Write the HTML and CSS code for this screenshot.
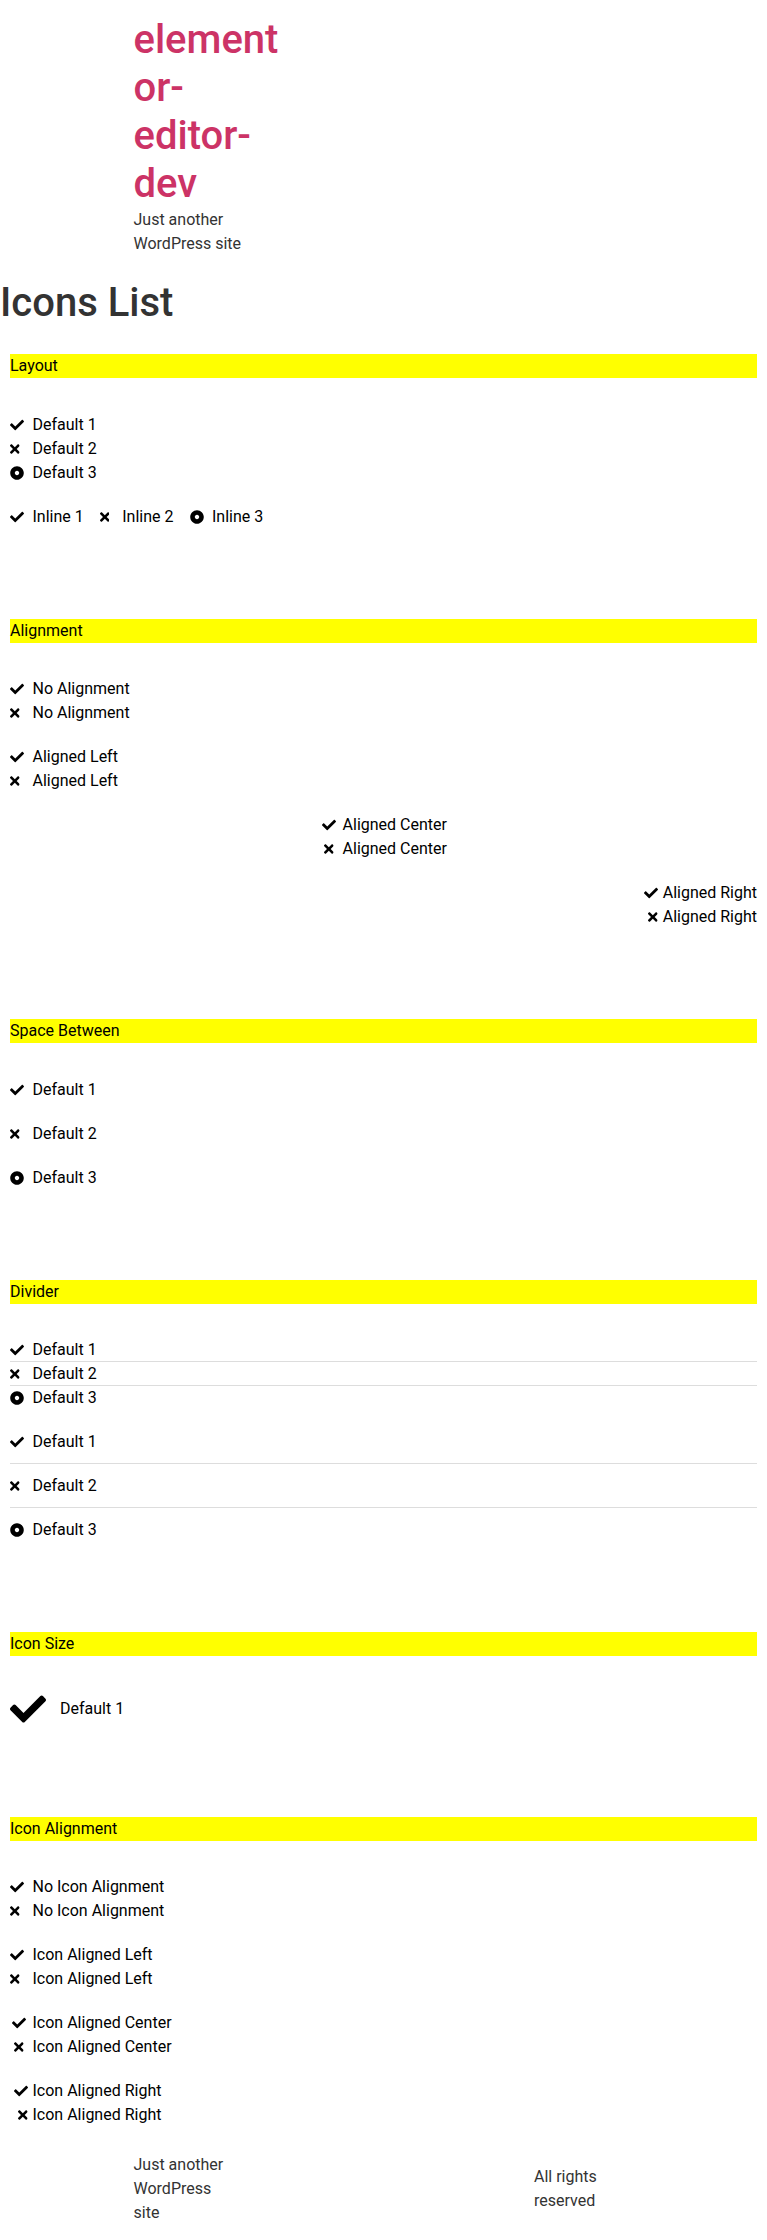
FILE: index.html
```html
<!DOCTYPE html>
<html lang="en">
<head>
<meta charset="utf-8">
<title>Icons List – elementor-editor-dev</title>
<link rel="stylesheet" href="styles.css">
</head>
<body>
<svg class="defs" width="0" height="0" aria-hidden="true">
  <defs>
    <symbol id="i-check" viewBox="0 0 512 512"><path d="M173.898 439.404l-166.4-166.4c-9.997-9.997-9.997-26.206 0-36.204l36.203-36.204c9.997-9.998 26.207-9.998 36.204 0L192 312.69 432.095 72.596c9.997-9.997 26.207-9.997 36.204 0l36.203 36.204c9.997 9.997 9.997 26.206 0 36.204l-294.4 294.401c-9.998 9.997-26.207 9.997-36.204-.001z"/></symbol>
    <symbol id="i-times" viewBox="0 0 352 512"><path d="M242.72 256l100.07-100.07c12.28-12.28 12.28-32.19 0-44.48l-22.24-22.24c-12.28-12.28-32.19-12.28-44.48 0L176 189.28 75.93 89.21c-12.28-12.28-32.19-12.28-44.48 0L9.21 111.450c-12.28 12.28-12.28 32.19 0 44.48L109.28 256 9.21 356.07c-12.28 12.28-12.28 32.19 0 44.48l22.24 22.24c12.28 12.28 32.2 12.28 44.48 0L176 322.72l100.07 100.07c12.28 12.28 32.2 12.28 44.48 0l22.24-22.24c12.28-12.28 12.28-32.19 0-44.48L242.72 256z"/></symbol>
    <symbol id="i-dot" viewBox="0 0 512 512"><path fill-rule="evenodd" d="M256 8C119.033 8 8 119.033 8 256s111.033 248 248 248 248-111.033 248-248S392.967 8 256 8zm80 248c0 44.112-35.888 80-80 80s-80-35.888-80-80 35.888-80 80-80 80 35.888 80 80z"/></symbol>
  </defs>
</svg>

<header class="site-header">
  <div class="branding">
    <a class="site-title" href="#">elementor-editor-dev</a>
    <p class="site-desc">Just another WordPress site</p>
  </div>
</header>

<main class="page">
  <h1 class="page-title">Icons List</h1>

  <section class="sec first">
    <h2 class="bar">Layout</h2>
    <div class="widgets">
      <ul class="list">
        <li class="item"><span class="ic"><svg class="g-check"><use href="#i-check"/></svg></span><span class="tx">Default 1</span></li>
        <li class="item"><span class="ic"><svg class="g-times"><use href="#i-times"/></svg></span><span class="tx">Default 2</span></li>
        <li class="item"><span class="ic"><svg class="g-dot"><use href="#i-dot"/></svg></span><span class="tx">Default 3</span></li>
      </ul>
      <ul class="list inline">
        <li class="item"><span class="ic"><svg class="g-check"><use href="#i-check"/></svg></span><span class="tx">Inline 1</span></li>
        <li class="item"><span class="ic"><svg class="g-times"><use href="#i-times"/></svg></span><span class="tx">Inline 2</span></li>
        <li class="item"><span class="ic"><svg class="g-dot"><use href="#i-dot"/></svg></span><span class="tx">Inline 3</span></li>
      </ul>
    </div>
  </section>

  <section class="sec">
    <h2 class="bar">Alignment</h2>
    <div class="widgets">
      <ul class="list">
        <li class="item"><span class="ic"><svg class="g-check"><use href="#i-check"/></svg></span><span class="tx">No Alignment</span></li>
        <li class="item"><span class="ic"><svg class="g-times"><use href="#i-times"/></svg></span><span class="tx">No Alignment</span></li>
      </ul>
      <ul class="list">
        <li class="item"><span class="ic"><svg class="g-check"><use href="#i-check"/></svg></span><span class="tx">Aligned Left</span></li>
        <li class="item"><span class="ic"><svg class="g-times"><use href="#i-times"/></svg></span><span class="tx">Aligned Left</span></li>
      </ul>
      <ul class="list al-center">
        <li class="item"><span class="ic"><svg class="g-check"><use href="#i-check"/></svg></span><span class="tx">Aligned Center</span></li>
        <li class="item"><span class="ic"><svg class="g-times"><use href="#i-times"/></svg></span><span class="tx">Aligned Center</span></li>
      </ul>
      <ul class="list al-right">
        <li class="item"><span class="ic"><svg class="g-check"><use href="#i-check"/></svg></span><span class="tx">Aligned Right</span></li>
        <li class="item"><span class="ic"><svg class="g-times"><use href="#i-times"/></svg></span><span class="tx">Aligned Right</span></li>
      </ul>
    </div>
  </section>

  <section class="sec">
    <h2 class="bar">Space Between</h2>
    <div class="widgets">
      <ul class="list spaced">
        <li class="item"><span class="ic"><svg class="g-check"><use href="#i-check"/></svg></span><span class="tx">Default 1</span></li>
        <li class="item"><span class="ic"><svg class="g-times"><use href="#i-times"/></svg></span><span class="tx">Default 2</span></li>
        <li class="item"><span class="ic"><svg class="g-dot"><use href="#i-dot"/></svg></span><span class="tx">Default 3</span></li>
      </ul>
    </div>
  </section>

  <section class="sec">
    <h2 class="bar">Divider</h2>
    <div class="widgets">
      <ul class="list divided">
        <li class="item"><span class="ic"><svg class="g-check"><use href="#i-check"/></svg></span><span class="tx">Default 1</span></li>
        <li class="item"><span class="ic"><svg class="g-times"><use href="#i-times"/></svg></span><span class="tx">Default 2</span></li>
        <li class="item"><span class="ic"><svg class="g-dot"><use href="#i-dot"/></svg></span><span class="tx">Default 3</span></li>
      </ul>
      <ul class="list divided spaced">
        <li class="item"><span class="ic"><svg class="g-check"><use href="#i-check"/></svg></span><span class="tx">Default 1</span></li>
        <li class="item"><span class="ic"><svg class="g-times"><use href="#i-times"/></svg></span><span class="tx">Default 2</span></li>
        <li class="item"><span class="ic"><svg class="g-dot"><use href="#i-dot"/></svg></span><span class="tx">Default 3</span></li>
      </ul>
    </div>
  </section>

  <section class="sec">
    <h2 class="bar">Icon Size</h2>
    <div class="widgets">
      <ul class="list big">
        <li class="item"><span class="ic"><svg class="g-check"><use href="#i-check"/></svg></span><span class="tx">Default 1</span></li>
      </ul>
    </div>
  </section>

  <section class="sec last">
    <h2 class="bar">Icon Alignment</h2>
    <div class="widgets">
      <ul class="list">
        <li class="item"><span class="ic"><svg class="g-check"><use href="#i-check"/></svg></span><span class="tx">No Icon Alignment</span></li>
        <li class="item"><span class="ic"><svg class="g-times"><use href="#i-times"/></svg></span><span class="tx">No Icon Alignment</span></li>
      </ul>
      <ul class="list">
        <li class="item"><span class="ic"><svg class="g-check"><use href="#i-check"/></svg></span><span class="tx">Icon Aligned Left</span></li>
        <li class="item"><span class="ic"><svg class="g-times"><use href="#i-times"/></svg></span><span class="tx">Icon Aligned Left</span></li>
      </ul>
      <ul class="list ia-center">
        <li class="item"><span class="ic"><svg class="g-check"><use href="#i-check"/></svg></span><span class="tx">Icon Aligned Center</span></li>
        <li class="item"><span class="ic"><svg class="g-times"><use href="#i-times"/></svg></span><span class="tx">Icon Aligned Center</span></li>
      </ul>
      <ul class="list ia-right">
        <li class="item"><span class="ic"><svg class="g-check"><use href="#i-check"/></svg></span><span class="tx">Icon Aligned Right</span></li>
        <li class="item"><span class="ic"><svg class="g-times"><use href="#i-times"/></svg></span><span class="tx">Icon Aligned Right</span></li>
      </ul>
    </div>
  </section>
</main>

<footer class="site-footer">
  <p class="f-desc">Just another WordPress site</p>
  <p class="f-copy">All rights reserved</p>
</footer>
</body>
</html>
```

FILE: styles.css
```css
* { box-sizing: border-box; }

html, body {
  margin: 0;
  padding: 0;
}

body {
  font-family: Roboto, "Liberation Sans", Arial, sans-serif;
  font-size: 16px;
  line-height: 1.5;
  color: #333;
  background: #fff;
}

.defs {
  position: absolute;
  width: 0;
  height: 0;
  overflow: hidden;
}

/* header */
.site-header {
  width: 500px;
  margin: 0 auto;
  padding: 16px 0;
}

.branding {
  width: 150px;
}

.site-title {
  display: block;
  font-size: 40px;
  font-weight: 500;
  line-height: 48px;
  color: #c36;
  text-decoration: none;
  overflow-wrap: break-word;
}

.site-desc {
  margin: 0;
  line-height: 24px;
}

/* page */
.page-title {
  margin: 7px 0 0;
  font-size: 40px;
  font-weight: 500;
  line-height: 48px;
  color: #333;
}

.sec {
  padding: 0 10px;
  margin-top: 90px;
}

.sec.first {
  margin-top: 27px;
}

.sec.last {
  padding-bottom: 10px;
}

.bar {
  margin: 0 0 34.5px;
  height: 24px;
  font-size: 16px;
  font-weight: 400;
  line-height: 24px;
  background: #ffff00;
  color: #000;
}

.widgets {
  display: flex;
  flex-direction: column;
  gap: 20px;
}

/* icon list */
.list {
  list-style: none;
  margin: 0;
  padding: 0;
  display: flex;
  flex-direction: column;
}

.item {
  position: relative;
  display: flex;
  align-items: center;
  color: #000;
}

.ic {
  display: flex;
  align-items: center;
  justify-content: flex-start;
  flex-shrink: 0;
  width: 1.25em;
  font-size: 14px;
}

.ic svg {
  display: block;
  height: 1em;
  fill: #000;
}

.g-check, .g-dot { width: 1em; }
.g-times { width: 0.6875em; }

.tx {
  padding-left: 5px;
  line-height: 24px;
}

/* layout: inline */
.list.inline {
  flex-direction: row;
  flex-wrap: wrap;
  margin: 0 -8px;
}

.list.inline .item {
  margin: 0 8px;
}

/* alignment */
.al-center .item,
.al-center .ic { justify-content: center; }

.al-right .item,
.al-right .ic { justify-content: flex-end; }

/* space between */
.list.spaced { gap: 20px; }

/* divider */
.list.divided .item:not(:last-child)::after {
  content: "";
  position: absolute;
  left: 0;
  right: 0;
  bottom: 0;
  height: 1px;
  background: #ddd;
}

.list.divided.spaced .item:not(:last-child)::after {
  bottom: -10px;
}

/* icon size */
.list.big .ic { font-size: 36px; }

/* icon alignment */
.ia-center .ic { justify-content: center; }
.ia-right .ic { justify-content: flex-end; }

/* footer */
.site-footer {
  width: 500px;
  margin: 0 auto;
  padding: 16px 0;
  display: flex;
  justify-content: space-between;
  align-items: center;
}

.site-footer p {
  margin: 0;
  line-height: 24px;
}

.f-desc { width: 95px; }
.f-copy { width: 99.5px; }
```
